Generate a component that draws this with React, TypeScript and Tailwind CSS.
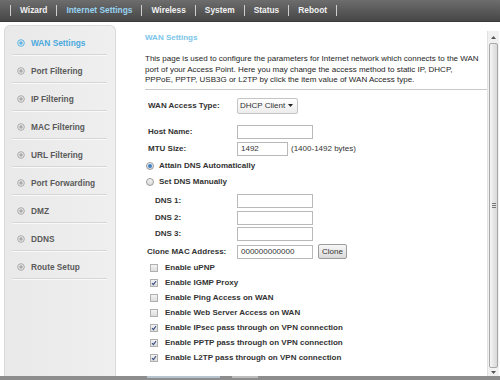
import type { ReactNode } from "react";

const navItems = ["Wizard", "Internet Settings", "Wireless", "System", "Status", "Reboot"];

const sideItems = [
  "WAN Settings",
  "Port Filtering",
  "IP Filtering",
  "MAC Filtering",
  "URL Filtering",
  "Port Forwarding",
  "DMZ",
  "DDNS",
  "Route Setup",
];

const options = [
  { label: "Enable uPNP", checked: false },
  { label: "Enable IGMP Proxy", checked: true },
  { label: "Enable Ping Access on WAN", checked: false },
  { label: "Enable Web Server Access on WAN", checked: false },
  { label: "Enable IPsec pass through on VPN connection", checked: true },
  { label: "Enable PPTP pass through on VPN connection", checked: true },
  { label: "Enable L2TP pass through on VPN connection", checked: true },
];

function Bullet({ active }: { active: boolean }) {
  const c = active ? "#5ab3e2" : "#a9a9a9";
  return (
    <svg width="8" height="8" viewBox="0 0 8 8" className="shrink-0">
      <circle cx="4" cy="4" r="3.3" fill="none" stroke={c} strokeWidth="1" />
      <circle cx="4" cy="4" r="1.7" fill={c} />
    </svg>
  );
}

function Row({ h, mt, children }: { h: string; mt: string; children: ReactNode }) {
  return <div className={`flex items-center ${h} ${mt}`}>{children}</div>;
}

function Field({ w, value }: { w: string; value?: string }) {
  return (
    <div
      className={`${w} h-[14px] border border-[#b9b9b9] bg-white flex items-center pl-[3px] text-[8px] font-normal text-[#333]`}
    >
      {value}
    </div>
  );
}

function Radio({ checked }: { checked: boolean }) {
  return (
    <span className="w-[8px] h-[8px] rounded-full border border-[#9a9a9a] bg-gradient-to-b from-[#f6f6f6] to-[#d9d9d9] flex items-center justify-center shrink-0">
      {checked && <span className="w-[4px] h-[4px] rounded-full bg-[#3f7fc4]" />}
    </span>
  );
}

function Check({ checked }: { checked: boolean }) {
  return (
    <span className="w-[8px] h-[8px] border border-[#b0b0b0] bg-gradient-to-b from-[#f3f3f3] to-[#dcdcdc] flex items-center justify-center shrink-0">
      {checked && (
        <svg width="6" height="6" viewBox="0 0 6 6">
          <path d="M1 3.2 L2.4 4.6 L5 1.2" fill="none" stroke="#3c4f86" strokeWidth="1.1" />
        </svg>
      )}
    </span>
  );
}

export default function App() {
  return (
    <div className="w-[500px] h-[380px] overflow-hidden bg-white flex flex-col font-['Liberation_Sans',Arial,sans-serif]">
      {/* top menu */}
      <nav className="h-[22px] shrink-0 flex items-center gap-[9px] pl-[10px] bg-gradient-to-b from-[#6d6d6d] to-[#474747] border-b border-[#3a3a3a]">
        <span className="w-px h-[11px] bg-[#cfcfcf]" />
        {navItems.map((item) => (
          <div key={item} className="flex items-center gap-[9px]">
            <span
              className={`text-[8.4px] font-bold ${
                item === "Internet Settings" ? "text-[#97d2f0]" : "text-[#f2f2f2]"
              }`}
            >
              {item}
            </span>
            <span className="w-px h-[11px] bg-[#cfcfcf]" />
          </div>
        ))}
      </nav>

      <div className="flex flex-1 min-h-0">
        {/* side menu */}
        <aside className="w-[112px] ml-[4px] mt-[3px] pt-[1px] rounded-t-[6px] border border-b-0 border-[#dadada] bg-gradient-to-r from-[#e9e9e9] to-[#efefef]">
          {sideItems.map((item, i) => (
            <div
              key={item}
              className="h-[28px] mx-[7px] mr-[8px] pt-[5px] pl-[5px] flex items-center gap-[6px] border-b border-[#d6d6d6] shadow-[0_1px_0_#f9f9f9]"
            >
              <Bullet active={i === 0} />
              <span
                className={`text-[8.3px] font-bold whitespace-nowrap ${
                  i === 0 ? "text-[#4ba9dd]" : "text-[#5a5a5a]"
                }`}
              >
                {item}
              </span>
            </div>
          ))}
        </aside>

        {/* page frame */}
        <main className="flex-1 flex min-w-0">
          <div className="flex-1 pl-[29px] pt-[10px] text-[8px] text-[#262626]">
            <h1 className="leading-[11px] font-bold text-[#7cc5ea]">WAN Settings</h1>
            <p className="mt-[11px] leading-[10.5px] whitespace-nowrap">
              This page is used to configure the parameters for Internet network which connects to the WAN
              <br />
              port of your Access Point. Here you may change the access method to static IP, DHCP,
              <br />
              PPPoE, PPTP, USB3G or L2TP by click the item value of WAN Access type.
            </p>
            <div className="mt-[3px] h-px bg-[#c9c9c9]" />

            <div className="font-bold text-[#333]">
              <Row h="h-[16px]" mt="mt-[8px]">
                <span className="w-[92px] pl-[3px]">WAN Access Type:</span>
                <div className="w-[61px] h-[16px] border border-[#c4c4c4] rounded-[2px] bg-gradient-to-b from-white to-[#ececec] flex items-center justify-between pl-[2px] pr-[4px] font-normal">
                  <span>DHCP Client</span>
                  <svg width="5" height="3" viewBox="0 0 5 3">
                    <path d="M0 0 H5 L2.5 3 Z" fill="#222" />
                  </svg>
                </div>
              </Row>
              <Row h="h-[14px]" mt="mt-[11px]">
                <span className="w-[92px] pl-[3px]">Host Name:</span>
                <Field w="w-[76px]" />
              </Row>
              <Row h="h-[14px]" mt="mt-[3px]">
                <span className="w-[92px] pl-[3px]">MTU Size:</span>
                <Field w="w-[51px]" value="1492" />
                <span className="ml-[3px] font-normal">(1400-1492 bytes)</span>
              </Row>
              <Row h="h-[14px]" mt="mt-[3px]">
                <span className="ml-[1px] mr-[5px]">
                  <Radio checked />
                </span>
                <span>Attain DNS Automatically</span>
              </Row>
              <Row h="h-[14px]" mt="mt-[2px]">
                <span className="ml-[1px] mr-[5px]">
                  <Radio checked={false} />
                </span>
                <span>Set DNS Manually</span>
              </Row>
              {["DNS 1:", "DNS 2:", "DNS 3:"].map((d, i) => (
                <Row key={d} h="h-[14px]" mt={i === 0 ? "mt-[5px]" : i === 1 ? "mt-[3px]" : "mt-[2px]"}>
                  <span className="w-[92px] pl-[10px]">{d}</span>
                  <Field w="w-[76px]" />
                </Row>
              ))}
              <Row h="h-[16px]" mt="mt-[3px]">
                <span className="w-[92px] pl-[2px]">Clone MAC Address:</span>
                <Field w="w-[76px]" value="000000000000" />
                <button className="ml-[5px] w-[29px] h-[15px] border border-[#9c9c9c] rounded-[2px] bg-gradient-to-b from-[#f7f7f7] to-[#dadada] text-[8px] font-normal text-[#333] leading-none">
                  Clone
                </button>
              </Row>
              <div className="mt-[1px]">
                {options.map((o) => (
                  <div key={o.label} className="h-[15px] flex items-center">
                    <span className="ml-[5px] mr-[7px]">
                      <Check checked={o.checked} />
                    </span>
                    <span className="whitespace-nowrap">{o.label}</span>
                  </div>
                ))}
              </div>
            </div>
          </div>

          {/* scrollbar */}
          <div className="w-[12px] mt-[9px] mr-[1px] flex flex-col bg-[#f1f1f1] border-l border-[#e2e2e2]">
            <div className="h-[12px] flex items-center justify-center">
              <svg width="5" height="3" viewBox="0 0 5 3">
                <path d="M0 3 H5 L2.5 0 Z" fill="#555" />
              </svg>
            </div>
            <div className="flex-1 mx-[1px] rounded-[2px] border border-[#a8a8a8] bg-gradient-to-r from-[#f5f5f5] to-[#d8d8d8] flex items-center justify-center">
              <div className="flex flex-col gap-[1px]">
                <span className="w-[4px] h-px bg-[#777]" />
                <span className="w-[4px] h-px bg-[#777]" />
                <span className="w-[4px] h-px bg-[#777]" />
              </div>
            </div>
            <div className="h-[8px] flex items-center justify-center">
              <svg width="5" height="3" viewBox="0 0 5 3">
                <path d="M0 0 H5 L2.5 3 Z" fill="#555" />
              </svg>
            </div>
          </div>
        </main>
      </div>

      {/* bottom edge with clipped buttons */}
      <div className="h-[4px] shrink-0 bg-[#8d8d8d] flex items-start gap-[12px] pl-[147px]">
        <span className="w-[73px] h-[2px] bg-[#b7c3cf]" />
        <span className="w-[26px] h-[2px] bg-[#bdbdbd]" />
      </div>
    </div>
  );
}
